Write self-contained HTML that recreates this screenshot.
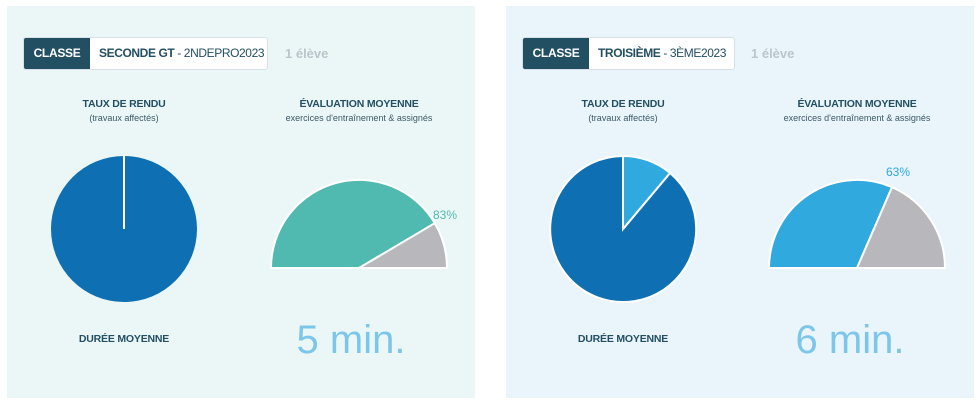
<!DOCTYPE html>
<html><head><meta charset="utf-8"><style>
*{margin:0;padding:0;box-sizing:border-box}
body{width:980px;height:409px;background:#fff;position:relative;font-family:"Liberation Sans",sans-serif;overflow:hidden}
.p{position:absolute;top:6px;height:392px}
.a{position:absolute}
.badge{height:33px;top:31px;display:flex;border:1px solid #d6e0e6;border-radius:3px;background:#fff;overflow:hidden;white-space:nowrap}
.badge .k{background:#234f63;color:#fff;font-weight:bold;font-size:12px;line-height:31px;width:66px;text-align:center;letter-spacing:-0.3px;flex:none}
.badge .v{color:#234f63;font-size:12px;line-height:31px;padding:0 0 0 9px;letter-spacing:-0.4px}
.el{top:31px;line-height:33px;font-size:13px;font-weight:bold;color:#b9c6cb}
.t{font-size:10.5px;font-weight:bold;color:#234f63;text-align:center;width:200px;letter-spacing:-0.2px}
.s{font-size:9px;color:#3c5a68;text-align:center;width:220px}
.big{font-size:40px;font-weight:normal;color:#7cc6ea;text-align:center;width:200px}
</style></head><body>
<div class="p" style="left:7px;width:468px;background:#ebf7f7">
 <div class="badge a" style="left:16px;width:245px"><span class="k">CLASSE</span><span class="v"><b>SECONDE GT</b> - 2NDEPRO2023</span></div>
 <div class="a el" style="left:278px">1 élève</div>
 <div class="a t" style="left:17px;top:92px">TAUX DE RENDU</div>
 <div class="a s" style="left:7px;top:107px">(travaux affectés)</div>
 <div class="a t" style="left:252px;top:92px">ÉVALUATION MOYENNE</div>
 <div class="a s" style="left:242px;top:107px">exercices d'entraînement &amp; assignés</div>
 <div class="a t" style="left:17px;top:327px">DURÉE MOYENNE</div>
 <div class="a big" style="left:244px;top:312px">5 min.</div>
</div>
<div class="p" style="left:506px;width:468px;background:#e9f4fb">
 <div class="badge a" style="left:16px;width:213px"><span class="k">CLASSE</span><span class="v"><b>TROISIÈME</b> - 3ÈME2023</span></div>
 <div class="a el" style="left:245px">1 élève</div>
 <div class="a t" style="left:17px;top:92px">TAUX DE RENDU</div>
 <div class="a s" style="left:7px;top:107px">(travaux affectés)</div>
 <div class="a t" style="left:251px;top:92px">ÉVALUATION MOYENNE</div>
 <div class="a s" style="left:241px;top:107px">exercices d'entraînement &amp; assignés</div>
 <div class="a t" style="left:17px;top:327px">DURÉE MOYENNE</div>
 <div class="a big" style="left:244px;top:312px">6 min.</div>
</div>
<svg class="a" style="left:0;top:0" width="980" height="409">
 <circle cx="124" cy="229" r="73" fill="#0e70b2"/>
 <line x1="124" y1="229" x2="124" y2="156" stroke="#fff" stroke-width="2"/>
 <path d="M271 268 A88 88 0 0 1 434.8 223.2 L359 268 Z" fill="#50b9b0" stroke="#fff" stroke-width="2"/>
 <path d="M434.8 223.2 A88 88 0 0 1 447 268 L359 268 Z" fill="#b8b8bc" stroke="#fff" stroke-width="2"/>
 <text x="433" y="219" font-size="12" fill="#50b9b0" font-family="Liberation Sans">83%</text>
 <path d="M623 229 L623 156 A73 73 0 1 0 670 173 Z" fill="#0e70b2" stroke="#fff" stroke-width="2"/>
 <path d="M623 229 L623 156 A73 73 0 0 1 670 173 Z" fill="#2fa9de" stroke="#fff" stroke-width="2"/>
 <path d="M769 268 A88 88 0 0 1 892 187.2 L857 268 Z" fill="#2fa9de" stroke="#fff" stroke-width="2"/>
 <path d="M892 187.2 A88 88 0 0 1 945 268 L857 268 Z" fill="#b8b8bc" stroke="#fff" stroke-width="2"/>
 <text x="886" y="176" font-size="12" fill="#2fa9de" font-family="Liberation Sans">63%</text>
</svg>
</body></html>
